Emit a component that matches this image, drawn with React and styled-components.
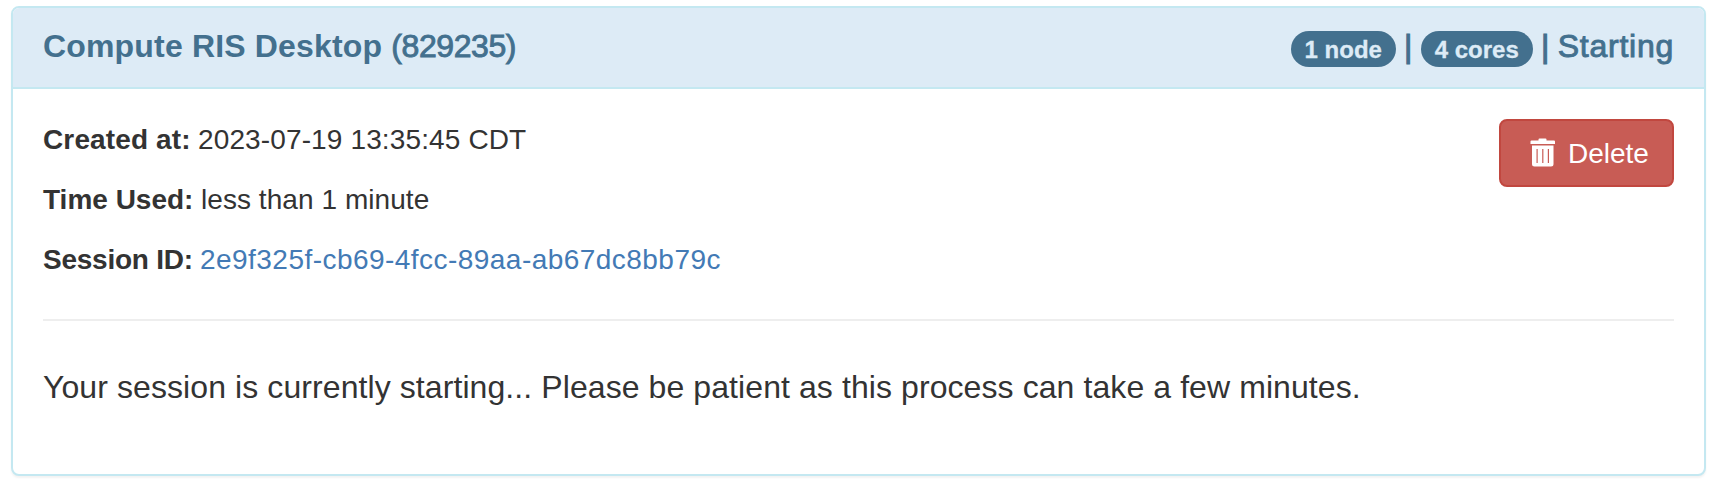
import React from "react";
import styled, { createGlobalStyle } from "styled-components";

const GlobalStyle = createGlobalStyle`
  *, *::before, *::after { box-sizing: border-box; }
  body {
    margin: 0;
    background: #fff;
    color: #333;
    font: 28px/40px "Liberation Sans", Arial, sans-serif;
  }
`;

const Page = styled.main`
  padding: 6px 12px 12px 11px;
`;

const Panel = styled.section`
  height: 470px;
  border: 2px solid #c4e8f1;
  border-radius: 8px;
  background: #fff;
  box-shadow: 0 2px 2px rgba(0, 0, 0, 0.05);
`;

const PanelHeading = styled.header`
  display: flex;
  justify-content: space-between;
  height: 81px;
  padding: 20px 30px;
  border-bottom: 2px solid #c4e8f1;
  border-radius: 6px 6px 0 0;
  background: #ddebf6;
  color: #43708e;
  font-size: 32px;
  line-height: 36px;
  white-space: nowrap;
`;

const Title = styled.h1`
  margin: 0;
  font-size: 32px;
  font-weight: 700;
  letter-spacing: 0.17px;
`;

const TitleId = styled.span`
  font-weight: 400;
  letter-spacing: -0.42px;
  -webkit-text-stroke: 0.9px currentColor;
`;

const Status = styled.div`
  display: flex;
`;

const Badge = styled.span`
  height: 36px;
  width: ${(p) => p.$width}px;
  margin-top: 3px;
  border-radius: 20px;
  background: #43708e;
  color: #ddebf6;
  font-size: 24px;
  font-weight: 700;
  line-height: 37px;
  text-align: center;
  -webkit-text-stroke: 0.3px currentColor;
`;

const Separator = styled.span`
  width: 25px;
  text-align: center;
  -webkit-text-stroke: 1.2px currentColor;
`;

const StatusText = styled.span`
  letter-spacing: 0.75px;
  -webkit-text-stroke: 0.9px currentColor;
`;

const PanelBody = styled.div`
  padding: 30px;
`;

const Summary = styled.div`
  display: flex;
  justify-content: space-between;
  align-items: flex-start;
`;

const Fields = styled.div`
  padding-top: 1px;
`;

const Field = styled.p`
  margin: 0 0 20px;
  white-space: nowrap;
`;

const Label = styled.strong`
  display: inline-block;
  width: ${(p) => p.$width}px;
  letter-spacing: ${(p) => p.$tracking || 0}px;
`;

const Value = styled.span`
  letter-spacing: ${(p) => p.$tracking || 0}px;
`;

const SessionLink = styled.a`
  color: #437ab5;
  text-decoration: none;
  letter-spacing: 0.46px;
`;

const DeleteButton = styled.button`
  display: flex;
  align-items: center;
  width: 175px;
  height: 68px;
  padding: 1px 0 0 29px;
  border: 2px solid #c1473f;
  border-radius: 8px;
  background: #c85c55;
  color: #fff;
  font: inherit;
`;

const TrashIcon = styled.svg`
  width: 26px;
  height: 30px;
  margin-right: 12px;
  margin-bottom: 1px;
`;

const Divider = styled.hr`
  height: 2px;
  margin: 19px 0 40px;
  border: 0;
  background: #eee;
`;

const Message = styled.p`
  margin: 0;
  padding-top: 4px;
  font-size: 32px;
  line-height: 45px;
  white-space: nowrap;
  letter-spacing: 0.085px;
`;

export default function App() {
  return (
    <Page>
      <GlobalStyle />
      <Panel>
        <PanelHeading>
          <Title>
            Compute RIS Desktop <TitleId>(829235)</TitleId>
          </Title>
          <Status>
            <Badge $width={105}>1 node</Badge>
            <Separator>|</Separator>
            <Badge $width={112}>4 cores</Badge>
            <Separator>|</Separator>
            <StatusText>Starting</StatusText>
          </Status>
        </PanelHeading>
        <PanelBody>
          <Summary>
            <Fields>
              <Field><Label $width={155} $tracking={0.13}>Created at:</Label><Value $tracking={0.13}>2023-07-19 13:35:45 CDT</Value></Field>
              <Field><Label $width={158}>Time Used:</Label><Value $tracking={0.06}>less than 1 minute</Value></Field>
              <Field><Label $width={157} $tracking={-0.25}>Session ID:</Label><SessionLink href="#">2e9f325f-cb69-4fcc-89aa-ab67dc8bb79c</SessionLink></Field>
            </Fields>
            <DeleteButton type="button">
              <TrashIcon viewBox="0 0 26 30" aria-hidden="true">
                <path fill="#fff" d="M8.500 2.500V1.500Q8.500 0.500 9.500 0.500H15.500Q16.500 0.500 16.500 1.500V2.500H24Q25 2.500 25 3.500V6H0.500V3.500Q0.500 2.500 1.500 2.500Z" />
                <path fill="#fff" fillRule="evenodd" d="M2 7.500H23.500V26Q23.500 28.500 21 28.500H4.500Q2 28.500 2 26ZM6.500 11V25H7.700V11ZM12.200 11V25H13.400V11ZM17.800 11V25H19V11Z" />
              </TrashIcon>
              Delete
            </DeleteButton>
          </Summary>
          <Divider />
          <Message>Your session is currently starting... Please be patient as this process can take a few minutes.</Message>
        </PanelBody>
      </Panel>
    </Page>
  );
}
